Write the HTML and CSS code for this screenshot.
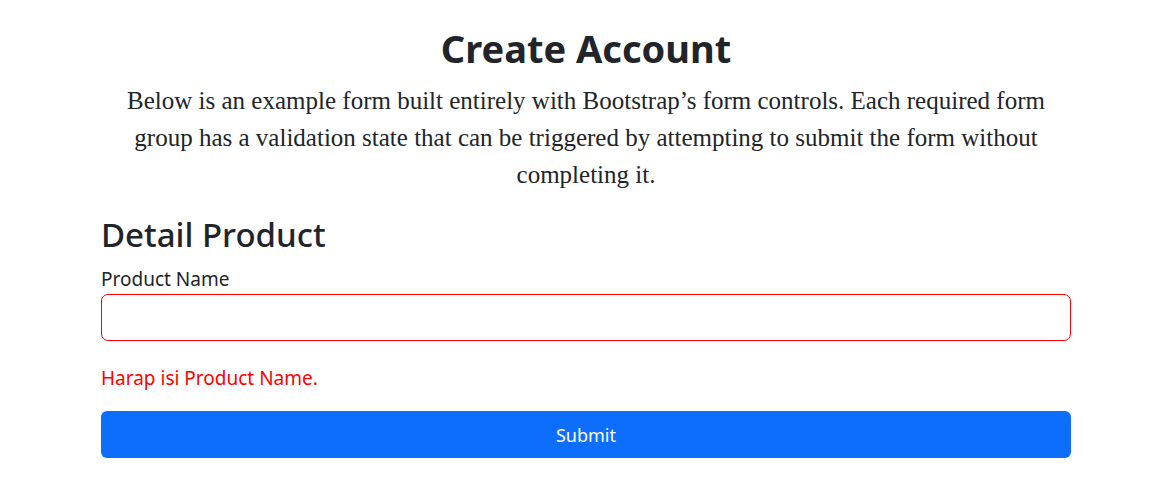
FILE: index.html
```html
<!DOCTYPE html>
<html lang="en">
<head>
<meta charset="utf-8">
<title>Create Account</title>
<link rel="stylesheet" href="styles.css">
</head>
<body>
<main class="container">
  <header class="intro">
    <h1 class="title">Create Account</h1>
    <p class="lead">Below is an example form built entirely with Bootstrap’s form controls. Each required form group has a validation state that can be triggered by attempting to submit the form without completing it.</p>
  </header>
  <form class="form" novalidate>
    <h2 class="section-title">Detail Product</h2>
    <label class="label" for="productName">Product Name</label>
    <input class="input is-invalid" id="productName" type="text">
    <div class="feedback">Harap isi Product Name.</div>
    <button class="btn-submit" type="button">Submit</button>
  </form>
</main>
</body>
</html>
```

FILE: styles.css
```css
* { box-sizing: border-box; }
html, body { margin: 0; padding: 0; background: #fff; }
body {
  font-family: "Noto Sans", "Open Sans", sans-serif;
  color: #212529;
}
.container {
  width: 970px;
  margin-left: 101px;
  padding-top: 24px;
}
.intro { text-align: center; }
.title {
  margin: 0;
  font-size: 38px;
  font-weight: 700;
  line-height: 48px;
}
.lead {
  margin: 10px 0 0;
  font-family: "Liberation Serif", serif;
  font-size: 25px;
  line-height: 37px;
  padding: 0 20px;
}
.form {
  display: flex;
  flex-direction: column;
  margin-top: 22px;
}
.section-title {
  margin: 0;
  font-size: 33px;
  font-weight: 500;
  line-height: 40px;
}
.label {
  font-size: 19px;
  line-height: 27px;
  margin-top: 11px;
}
.input {
  height: 47px;
  margin-top: 1px;
  border: 1px solid #ff0000;
  border-radius: 7px;
  font-size: 18px;
  padding: 8px 16px;
  outline: none;
}
.feedback {
  color: #ff0000;
  font-size: 19px;
  line-height: 27px;
  margin-top: 24px;
}
.btn-submit {
  margin-top: 19px;
  height: 47px;
  border: 0;
  border-radius: 6px;
  background: #0d6efd;
  color: #fff;
  font-family: inherit;
  font-size: 18px;
}
```
